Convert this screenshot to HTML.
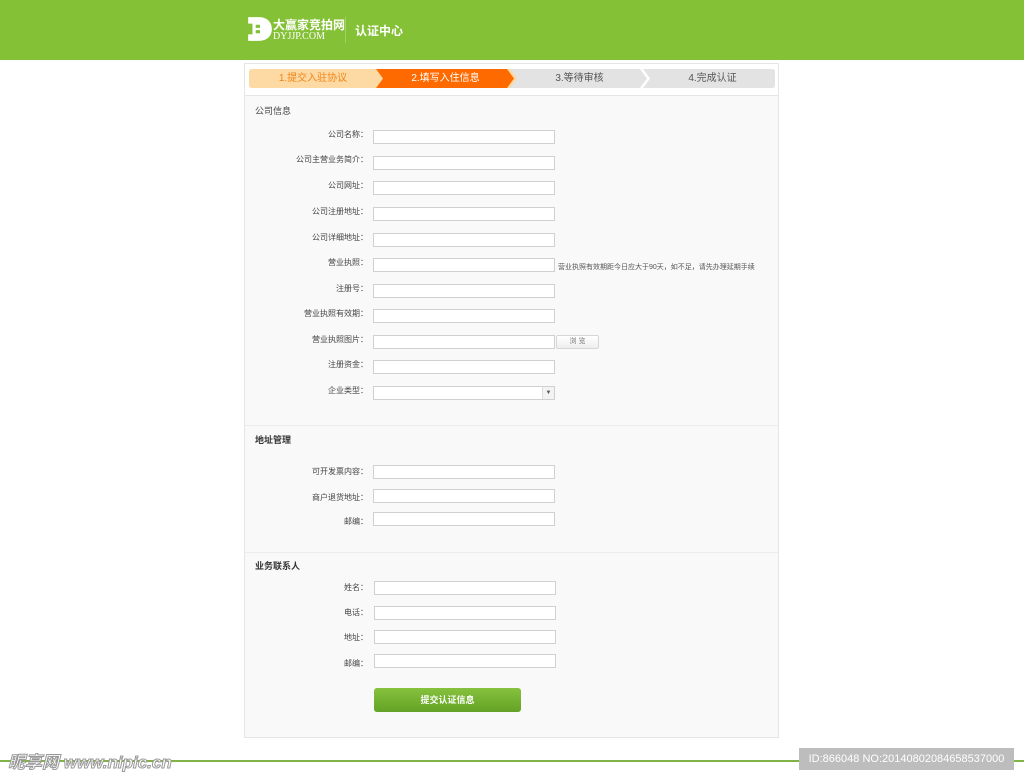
<!DOCTYPE html>
<html><head><meta charset="utf-8"><style>
*{margin:0;padding:0;box-sizing:border-box}
body{width:1024px;height:778px;background:#fff;position:relative;overflow:hidden;font-family:"Liberation Sans","Noto Sans CJK SC",sans-serif;}
.a{position:absolute}
.hd{left:0;top:0;width:1024px;height:60px;background:#84c136}
.lbl{font-size:8px;color:#444;text-align:right;width:160px;left:208px;line-height:14px}
.in{height:14px;background:#fff;border:1px solid #d0d0d0;width:182px}
.sec{font-size:9px;color:#333;left:255px}
.step{top:69px;height:19px;font-size:10px;line-height:19px;text-align:center}
</style></head><body>
<div class="a hd"></div>
<svg class="a" style="left:246px;top:15px" width="28" height="28" viewBox="0 0 26 26"><path d="M2 2h10c8 0 12 5 12 11s-4 11-12 11H2v-6h4V8H2z" fill="#fff"/><path d="M9 9h4v3H9zM9 14h4v3H9z" fill="#84c136"/></svg>
<div class="a" style="left:273px;top:16px;color:#fff;font-size:12px;font-weight:bold">大赢家竞拍网</div>
<div class="a" style="left:273px;top:31px;color:#fff;font-size:10px;font-family:'Liberation Serif',serif">DYJJP.COM</div>
<div class="a" style="left:345px;top:17px;width:1px;height:26px;background:#a3d163"></div>
<div class="a" style="left:355px;top:22px;color:#fff;font-size:12px;font-weight:bold">认证中心</div>
<div class="a" style="left:244px;top:63px;width:535px;height:675px;background:#f9f9f9;border:1px solid #e6e6e6"></div>
<div class="a" style="left:245px;top:64px;width:533px;height:32px;background:#fff;border-bottom:1px solid #e6e6e6"></div>
<svg class="a" style="left:249px;top:69px" width="526" height="19">
<path d="M3 0H370L377 9.5L370 19H3Q0 19 0 16V3Q0 0 3 0z" fill="#fdd9a3"/>
<path d="M127 0H258L265 9.5L258 19H127L134 9.5z" fill="#ff6a00"/>
<path d="M261 0H391L398 9.5L391 19H261L268 9.5z" fill="#e3e3e3"/>
<path d="M394 0H523Q526 0 526 3V16Q526 19 523 19H394L401 9.5z" fill="#e3e3e3"/>
</svg>
<div class="a step" style="left:249px;width:128px;color:#f08519">1.提交入驻协议</div>
<div class="a step" style="left:383px;width:125px;color:#fff">2.填写入住信息</div>
<div class="a step" style="left:517px;width:125px;color:#555">3.等待审核</div>
<div class="a step" style="left:650px;width:125px;color:#555">4.完成认证</div>
<div class="a sec" style="top:104px;color:#444">公司信息</div>
<div class="a lbl" style="top:128px">公司名称：</div><div class="a in" style="left:373px;top:130px"></div>
<div class="a lbl" style="top:153px">公司主营业务简介：</div><div class="a in" style="left:373px;top:156px"></div>
<div class="a lbl" style="top:179px">公司网址：</div><div class="a in" style="left:373px;top:181px"></div>
<div class="a lbl" style="top:205px">公司注册地址：</div><div class="a in" style="left:373px;top:207px"></div>
<div class="a lbl" style="top:231px">公司详细地址：</div><div class="a in" style="left:373px;top:233px"></div>
<div class="a lbl" style="top:256px">营业执照：</div><div class="a in" style="left:373px;top:258px"></div>
<div class="a" style="left:558px;top:262px;font-size:7px;color:#555">营业执照有效期距今日应大于90天，如不足，请先办理延期手续</div>
<div class="a lbl" style="top:282px">注册号：</div><div class="a in" style="left:373px;top:284px"></div>
<div class="a lbl" style="top:307px">营业执照有效期：</div><div class="a in" style="left:373px;top:309px"></div>
<div class="a lbl" style="top:333px">营业执照图片：</div><div class="a in" style="left:373px;top:335px"></div>
<div class="a" style="left:556px;top:335px;width:43px;height:14px;border:1px solid #d6d6d6;background:linear-gradient(#fff,#eee);border-radius:2px;font-size:7px;color:#777;text-align:center;line-height:12px">浏 览</div>
<div class="a lbl" style="top:358px">注册资金：</div><div class="a in" style="left:373px;top:360px"></div>
<div class="a lbl" style="top:384px">企业类型：</div><div class="a in" style="left:373px;top:386px"></div>
<div class="a" style="left:542px;top:387px;width:12px;height:12px;border-left:1px solid #ddd;background:#f3f3f3;font-size:6px;color:#555;text-align:center;line-height:12px">▼</div>
<div class="a" style="left:245px;top:425px;width:533px;height:1px;background:#ececec"></div>
<div class="a sec" style="top:433px;font-weight:bold">地址管理</div>
<div class="a lbl" style="top:465px">可开发票内容：</div><div class="a in" style="left:373px;top:465px"></div>
<div class="a lbl" style="top:491px">商户退货地址：</div><div class="a in" style="left:373px;top:489px"></div>
<div class="a lbl" style="top:515px">邮编：</div><div class="a in" style="left:373px;top:512px"></div>
<div class="a" style="left:245px;top:552px;width:533px;height:1px;background:#ececec"></div>
<div class="a sec" style="top:559px;font-weight:bold">业务联系人</div>
<div class="a lbl" style="top:581px">姓名：</div><div class="a in" style="left:374px;top:581px"></div>
<div class="a lbl" style="top:606px">电话：</div><div class="a in" style="left:374px;top:606px"></div>
<div class="a lbl" style="top:631px">地址：</div><div class="a in" style="left:374px;top:630px"></div>
<div class="a lbl" style="top:657px">邮编：</div><div class="a in" style="left:374px;top:654px"></div>
<div class="a" style="left:374px;top:688px;width:147px;height:24px;border-radius:3px;background:linear-gradient(#86c23d,#64a226);color:#fff;font-size:9px;text-align:center;line-height:24px;font-weight:bold">提交认证信息</div>
<div class="a" style="left:0;top:760px;width:1024px;height:2px;background:#7fb346"></div>
<div class="a" style="left:8px;top:748px;font-size:17px;font-style:italic;color:#fff;-webkit-text-stroke:1px #999;font-weight:bold">昵享网 www.nipic.cn</div>
<div class="a" style="left:799px;top:748px;width:215px;height:22px;background:#bdbdbd;color:#fff;font-size:11px;line-height:22px;text-align:center">ID:866048 NO:20140802084658537000</div>
</body></html>
